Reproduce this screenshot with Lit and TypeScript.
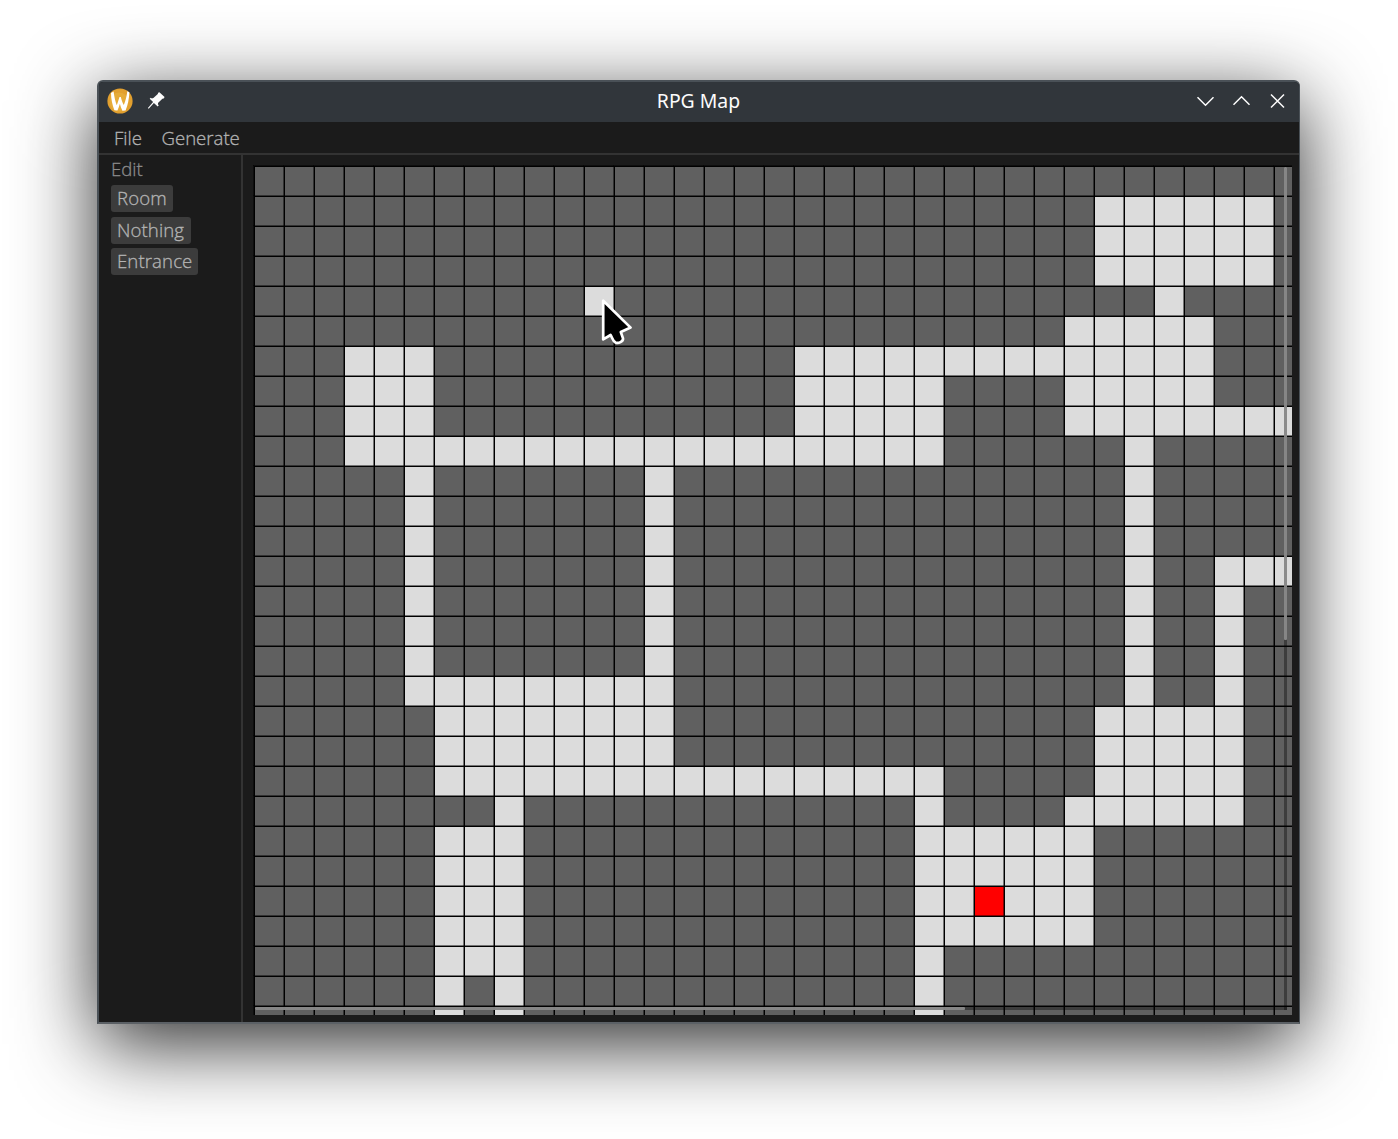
import { LitElement, html, svg, css } from "lit";
import { customElement, property } from "lit/decorators.js";

type Run = [row: number, from: number, to: number];

const CELL = 30;
const COLS = 35;
const ROWS = 29;

const span = (first: number, last: number, from: number, to: number): Run[] =>
  Array.from({ length: last - first + 1 }, (_, i) => [first + i, from, to] as Run);

const FLOOR: Run[] = [
  ...span(1, 3, 28, 33),
  ...span(4, 4, 11, 11),
  ...span(4, 4, 30, 30),
  ...span(5, 8, 27, 31),
  ...span(8, 8, 32, 34),
  ...span(6, 6, 23, 26),
  ...span(6, 9, 3, 5),
  ...span(6, 9, 18, 22),
  ...span(9, 9, 6, 17),
  ...span(9, 17, 29, 29),
  ...span(10, 17, 5, 5),
  ...span(10, 16, 13, 13),
  ...span(13, 13, 32, 34),
  ...span(14, 17, 32, 32),
  ...span(17, 20, 6, 13),
  ...span(18, 21, 28, 32),
  ...span(20, 20, 14, 22),
  ...span(21, 21, 8, 8),
  ...span(21, 21, 22, 22),
  ...span(21, 21, 27, 27),
  ...span(22, 26, 6, 8),
  ...span(22, 25, 22, 27),
  ...span(26, 28, 22, 22),
  ...span(27, 28, 6, 6),
  ...span(27, 28, 8, 8),
];
const ENTRANCE = { row: 24, col: 24 };

@customElement("title-bar")
class TitleBar extends LitElement {
  @property() heading = "";

  static styles = css`
    :host {
      display: grid;
      grid-template-columns: 1fr auto 1fr;
      align-items: start;
      height: 40px;
      padding: 0 9px 0 8px;
      background: #31363b;
      color: #fcfcfc;
      font-family: "Noto Sans", sans-serif;
      font-weight: 400;
    }
    .side { display: flex; align-items: center; height: 38px; }
    .left { gap: 12px; }
    .right { justify-content: flex-end; gap: 10px; }
    .heading { font-size: 19.4px; line-height: 38px; height: 38px; }
    svg { display: block; }
  `;

  render() {
    return html`
      <div class="side left">
        <svg width="26" height="26" viewBox="0 0 26 26">
          <circle cx="13" cy="13" r="12.6" fill="#e2a02f" />
          <circle cx="12" cy="14" r="9.5" fill="#e9b340" opacity=".6" />
          <path d="M4 5 L6.6 3.4 C7.3 9 8.4 13.6 9.8 17.2 C10.8 14.4 11.5 12 12.5 9 L13.8 9 C14.6 12 15.4 14.6 16.8 17 C18.6 12.8 19.8 8 20.3 3.2 L22.4 4.2 C22 11 20.8 17 18.6 22.6 L15.4 22.7 C14.2 20.4 13.4 18.2 12.9 15.8 C12.2 18.2 11.4 20.4 10.4 22.5 L7.4 22.2 C5.2 16.5 4 10.5 4 5 Z" fill="#fff" />
        </svg>
        <svg width="22" height="22" viewBox="0 0 22 22" fill="#fcfcfc">
          <path d="M14.4 2.2 L19.6 7.1 L18.7 8.4 L17.4 8.8 L13.2 12.7 L12.8 14.3 L13.8 15.3 L12.7 16.4 L8.9 13 L3.7 18.8 L2.9 18 L8.1 12.1 L4.7 8.7 L5.8 7.7 L6.9 8.6 L8.4 8 L12.8 4 L13.1 2.8 Z" />
        </svg>
      </div>
      <div class="heading">${this.heading}</div>
      <div class="side right">
        ${["M5.5 9.2 L13.5 17.2 L21.5 9.2", "M5.5 16.8 L13.5 8.8 L21.5 16.8", "M7 6.5 L20 19.5 M20 6.5 L7 19.5"].map(
          (d) => html`<svg width="26" height="26" viewBox="0 0 26 26">
            <path d=${d} fill="none" stroke="#fcfcfc" stroke-width="1.5" />
          </svg>`
        )}
      </div>
    `;
  }
}

@customElement("dungeon-map")
class DungeonMap extends LitElement {
  static styles = css`
    :host { display: block; position: relative; overflow: hidden; width: 1039px; height: 850px; }
    .map { display: block; }
    .bar { position: absolute; background: rgba(0, 0, 0, 0.36); }
    .thumb { background: #8a8a8a; border-radius: 1px; opacity: 0.95; }
    .vertical { top: 2px; right: 5px; width: 3px; height: 843px; }
    .vertical .thumb { height: 473px; }
    .horizontal { left: 2px; bottom: 5px; height: 3px; width: 1032px; }
    .horizontal .thumb { height: 3px; width: 710px; }
  `;

  private cell(row: number, col: number, fill: string) {
    return svg`<rect x=${col * CELL} y=${row * CELL} width=${CELL} height=${CELL} fill=${fill} />`;
  }

  render() {
    const w = COLS * CELL;
    const h = ROWS * CELL;
    return html`
      <svg class="map" width=${w} height=${h} viewBox="-2 -2 ${w} ${h}" shape-rendering="crispEdges">
        <rect width=${w} height=${h} fill="#606060" />
        ${FLOOR.map(
          ([row, from, to]) => svg`<rect x=${from * CELL} y=${row * CELL}
            width=${(to - from + 1) * CELL} height=${CELL} fill="#dcdcdc" />`
        )}
        ${this.cell(ENTRANCE.row, ENTRANCE.col, "#ff0000")}
        ${Array.from({ length: COLS + 1 }, (_, i) => svg`
          <rect x=${i * CELL - 2} y="-2" width="1" height=${h + 2} fill="#000" fill-opacity="0.48" />`)}
        ${Array.from({ length: ROWS + 1 }, (_, i) => svg`
          <rect x="-2" y=${i * CELL - 2} width=${w + 2} height="1" fill="#000" fill-opacity="0.48" />`)}
        ${Array.from({ length: COLS + 1 }, (_, i) => svg`
          <rect x=${i * CELL - 1} y="-1" width="1" height=${h + 1} fill="#000" />`)}
        ${Array.from({ length: ROWS + 1 }, (_, i) => svg`
          <rect x="-1" y=${i * CELL - 1} width=${w + 1} height="1" fill="#000" />`)}
      </svg>
      <div class="bar vertical"><div class="thumb"></div></div>
      <div class="bar horizontal"><div class="thumb"></div></div>
    `;
  }
}

@customElement("app-root")
class AppRoot extends LitElement {
  static styles = css`
    :host {
      display: block;
      position: relative;
      box-sizing: border-box;
      width: 1398px;
      height: 1139px;
      padding: 80px 98px 0 97px;
      background: #fff;
      overflow: hidden;
      font-family: "Open Sans", "Noto Sans", sans-serif;
      font-weight: 300;
    }
    .window {
      box-sizing: border-box;
      width: 1203px;
      height: 944px;
      border: 2px solid #4a5157;
      border-right-width: 1px;
      border-bottom-color: #5b6065;
      border-radius: 6px 6px 0 0;
      background: #1b1b1b;
      box-shadow: 0 20px 80px rgba(0, 0, 0, 0.83);
      overflow: hidden;
    }
    .menu, .tools {
      font-size: 18.6px;
      -webkit-text-stroke: 0.3px currentColor;
    }
    .menu {
      display: flex;
      box-sizing: border-box;
      height: 33px;
      padding-left: 15px;
      gap: 19.5px;
      border-bottom: 2px solid #333;
      color: #b4b4b4;
      line-height: 31px;
    }
    .body { display: flex; height: 867px; }
    .tools {
      display: flex;
      flex-direction: column;
      align-items: flex-start;
      box-sizing: border-box;
      width: 144px;
      padding-left: 12px;
      border-right: 2px solid #333;
      gap: 4.5px;
    }
    .label { color: #8c8c8c; line-height: 27.5px; height: 25.5px; }
    .tool {
      box-sizing: border-box;
      height: 27px;
      padding: 0 6px;
      border-radius: 3px;
      background: #3c3c3c;
      color: #b4b4b4;
      line-height: 26px;
      letter-spacing: 0.1px;
      white-space: nowrap;
    }
    .room { width: 62px; }
    .nothing { width: 80px; }
    .entrance { width: 87px; }
    .canvas { padding: 10px 0 0 10px; }
    .pointer { position: absolute; left: 598px; top: 294px; }
  `;

  render() {
    return html`
      <div class="window">
        <title-bar heading="RPG Map"></title-bar>
        <div class="menu"><span>File</span><span>Generate</span></div>
        <div class="body">
          <div class="tools">
            <div class="label">Edit</div>
            <div class="tool room">Room</div>
            <div class="tool nothing">Nothing</div>
            <div class="tool entrance">Entrance</div>
          </div>
          <div class="canvas"><dungeon-map></dungeon-map></div>
        </div>
      </div>
      <svg class="pointer" width="40" height="56" viewBox="0 0 40 56">
        <path d="M5.2 6.8 L5.2 45.4 L12.6 41 C14.2 43.3 14.6 47 17.5 48.5 C20.5 49.8 25.4 47.6 25 44.4 L22.8 38 L32.6 33.6 Z"
          fill="#000" stroke="#fff" stroke-width="2.7" stroke-linejoin="round" />
      </svg>
    `;
  }
}
